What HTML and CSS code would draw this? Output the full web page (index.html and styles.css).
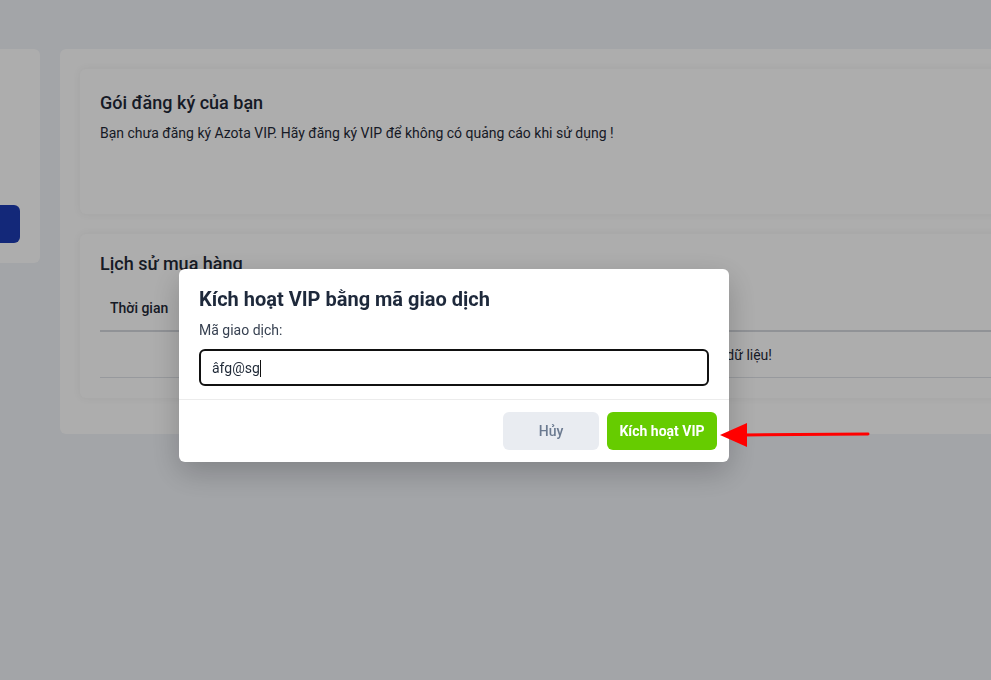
FILE: index.html
```html
<!DOCTYPE html>
<html lang="vi">
<head>
    <meta charset="UTF-8">
    <meta name="viewport" content="width=device-width, initial-scale=1.0">
    <title>Azota VIP</title>
    <link rel="stylesheet" href="styles.css">
</head>
<body>
    <div class="page">
        <aside class="side-card">
            <button class="side-btn" aria-label="Menu"></button>
        </aside>
        <main class="main-card">
            <section class="panel panel-plan">
                <h2 class="panel-title">Gói đăng ký của bạn</h2>
                <p class="panel-text">Bạn chưa đăng ký Azota VIP. Hãy đăng ký VIP để không có quảng cáo khi sử dụng !</p>
            </section>
            <section class="panel panel-history">
                <h2 class="panel-title">Lịch sử mua hàng</h2>
                <table class="history-table">
                    <thead>
                        <tr>
                            <th>Thời gian</th>
                            <th></th>
                        </tr>
                    </thead>
                    <tbody>
                        <tr>
                            <td colspan="2" class="empty">Không có dữ liệu!</td>
                        </tr>
                    </tbody>
                </table>
            </section>
        </main>
    </div>

    <!-- dim layer behind the dialog -->
    <div class="overlay"></div>

    <div class="modal" role="dialog">
        <div class="modal-body">
            <h3 class="modal-title">Kích hoạt VIP bằng mã giao dịch</h3>
            <label class="field-label">Mã giao dịch:</label>
            <div class="field-input">âfg@sg<span class="caret"></span></div>
        </div>
        <div class="modal-footer">
            <button class="btn btn-cancel">Hủy</button>
            <button class="btn btn-ok">Kích hoạt VIP</button>
        </div>
    </div>

    <svg class="pointer-arrow" width="152" height="30" viewBox="0 0 152 30">
        <line x1="26" y1="15" x2="150" y2="14" stroke="#ff0000" stroke-width="3" stroke-linecap="round"/>
        <polygon points="2,15 29,3 29,27" fill="#ff0000"/>
    </svg>
</body>
</html>
```

FILE: styles.css
```css
body {
    margin: 0;
    padding: 0;
    background-color: #f0f3f8;
    font-family: Roboto, "Noto Sans", sans-serif;
    font-size: 14px;
    color: #1f2937;
    overflow: hidden;
    height: 680px;
}

.page {
    display: flex;
    align-items: flex-start;
    gap: 20px;
    padding-top: 49px;
    width: 100%;
    overflow: hidden;
}

.side-card {
    flex: none;
    width: 260px;
    height: 214px;
    margin-left: -220px;
    box-sizing: border-box;
    padding: 20px;
    background-color: #ffffff;
    border-radius: 6px;
    display: flex;
    flex-direction: column;
    justify-content: flex-end;
}

.side-btn {
    height: 38px;
    border: none;
    border-radius: 6px;
    background-color: #1c3cb3;
}

.main-card {
    flex: none;
    width: 1316px;
    box-sizing: border-box;
    padding: 20px 20px 36px;
    background-color: #ffffff;
    border-radius: 6px;
    display: flex;
    flex-direction: column;
    gap: 20px;
}

.panel {
    background-color: #ffffff;
    border-radius: 6px;
    box-shadow: 0 0 8px rgba(0, 0, 0, 0.06);
    padding: 20px;
}

.panel-plan {
    height: 145px;
    box-sizing: border-box;
}

.panel-history {
    padding-top: 16px;
}

.panel-title {
    margin: 0;
    font-size: 18px;
    font-weight: 500;
    line-height: 28px;
    color: #1f2937;
}

.panel-text {
    margin: 6px 0 0;
    line-height: 20px;
}

.history-table {
    width: 100%;
    margin-top: 8px;
    border-collapse: collapse;
}

.history-table th {
    text-align: left;
    font-weight: 500;
    padding: 12px 10px;
    line-height: 20px;
    border-bottom: 2px solid #d4d7dd;
}

.history-table td {
    padding: 13px 10px 12px;
    line-height: 20px;
    border-bottom: 1px solid #dfe2e7;
}

.history-table .empty {
    text-align: center;
}

.overlay {
    position: fixed;
    inset: 0;
    background-color: rgba(0, 0, 0, 0.32);
}

.modal {
    position: fixed;
    top: 269px;
    left: 179px;
    width: 550px;
    background-color: #ffffff;
    border-radius: 6px;
    box-shadow: 0 10px 30px rgba(0, 0, 0, 0.22);
}

.modal-body {
    padding: 16px 20px 13px;
    border-bottom: 1px solid #ececec;
}

.modal-title {
    margin: 0;
    font-size: 20px;
    font-weight: 700;
    line-height: 28px;
    color: #1e293b;
}

.field-label {
    display: block;
    margin-top: 7px;
    line-height: 20px;
    color: #374151;
}

.field-input {
    margin-top: 9px;
    height: 37px;
    box-sizing: border-box;
    border: 2px solid #111111;
    border-radius: 6px;
    padding: 0 11px;
    display: flex;
    align-items: center;
    color: #1f2937;
}

.caret {
    display: inline-block;
    width: 1px;
    height: 17px;
    background-color: #111111;
    margin-top: 2px;
}

.modal-footer {
    display: flex;
    justify-content: flex-end;
    gap: 8px;
    padding: 12px;
}

.btn {
    height: 38px;
    border: none;
    border-radius: 6px;
    font-family: Roboto, "Noto Sans", sans-serif;
    font-size: 14px;
    cursor: pointer;
}

.btn-cancel {
    width: 96px;
    background-color: #e9ecf1;
    color: #6b7a90;
    font-weight: 500;
}

.btn-ok {
    width: 110px;
    background-color: #66cc00;
    color: #ffffff;
    font-weight: 700;
}

.pointer-arrow {
    position: fixed;
    top: 420px;
    left: 718px;
}
```
